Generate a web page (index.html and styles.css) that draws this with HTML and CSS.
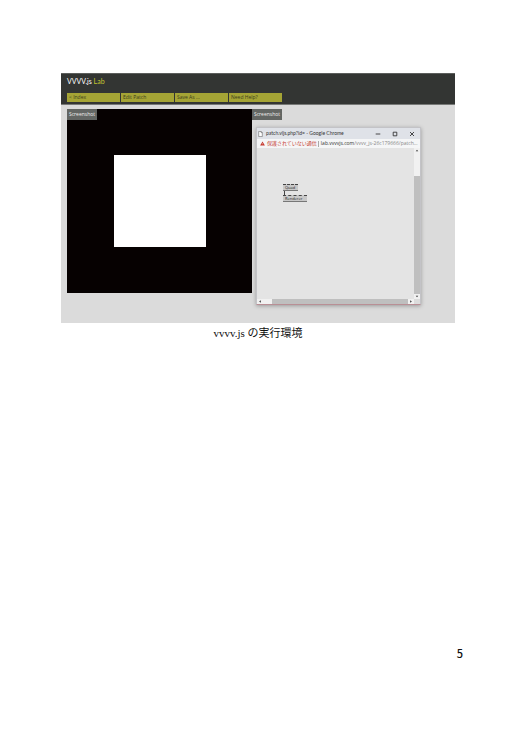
FILE: index.html
```
<!DOCTYPE html>
<html lang="ja">
<head>
    <meta charset="UTF-8">
    <meta name="viewport" content="width=device-width, initial-scale=1.0">
    <title>vvvv.js の実行環境</title>
    <link rel="stylesheet" href="styles.css">
</head>
<body>
    <figure class="figure">
        <div class="lab">
            <!-- Header -->
            <header class="lab-header">
                <div class="lab-brand">VVVV.js <span class="lab-name">Lab</span></div>
                <nav class="lab-nav">
                    <a href="#" class="lab-link">&lt; Index</a>
                    <a href="#" class="lab-link">Edit Patch</a>
                    <a href="#" class="lab-link">Save As ...</a>
                    <a href="#" class="lab-link">Need Help?</a>
                </nav>
            </header>

            <div class="stage">
                <!-- Renderer output -->
                <div class="renderer">
                    <button type="button" class="shot-btn">Screenshot</button>
                    <div class="quad"></div>
                </div>

                <!-- Patch window -->
                <div class="side">
                    <button type="button" class="shot-btn">Screenshot</button>
                    <div class="window">
                        <div class="titlebar">
                            <svg class="doc-icon" viewBox="0 0 8 10"><path d="M1 .7h4l2 2v6.6H1zM5 .7v2h2" fill="#fff" stroke="#555" stroke-width=".9"/></svg>
                            <span class="title">patch.vljs.php?id= - Google Chrome</span>
                            <button type="button" class="win-btn" aria-label="Minimize"><svg viewBox="0 0 6 6"><path d="M.7 3h4.6"/></svg></button>
                            <button type="button" class="win-btn" aria-label="Maximize"><svg viewBox="0 0 6 6"><path d="M1.2 1.2h3.6v3.6H1.2z"/></svg></button>
                            <button type="button" class="win-btn" aria-label="Close"><svg viewBox="0 0 6 6"><path d="M1 1l4 4M5 1L1 5"/></svg></button>
                        </div>
                        <div class="address">
                            <svg class="warn-icon" viewBox="0 0 10 10"><path d="M5 .8L9.8 9.2H.2z" fill="#c5392f"/><path d="M5 4v2M5 7.2v1" stroke="#fff" stroke-width=".7"/></svg>
                            <span class="warn">保護されていない通信</span>
                            <span class="divider"></span>
                            <span class="url"><span class="host">lab.vvvvjs.com</span>/vvvv_js-26c179666/patch...</span>
                        </div>
                        <div class="view">
                            <div class="patch">
                                <div class="node node-quad">Quad</div>
                                <div class="wire"></div>
                                <div class="node node-renderer">Renderer</div>
                            </div>
                            <div class="scroll-y">
                                <svg class="arrow" viewBox="0 0 6 6"><path d="M1.5 4L3 2l1.5 2z"/></svg>
                                <div class="thumb-y"></div>
                                <svg class="arrow" viewBox="0 0 6 6"><path d="M1.5 2L3 4l1.5-2z"/></svg>
                            </div>
                            <div class="scroll-x">
                                <svg class="arrow" viewBox="0 0 6 6"><path d="M4 1.5L2 3l2 1.5z"/></svg>
                                <div class="thumb-x"></div>
                                <svg class="arrow" viewBox="0 0 6 6"><path d="M2 1.5L4 3 2 4.5z"/></svg>
                            </div>
                            <div class="corner"></div>
                        </div>
                    </div>
                </div>
            </div>
        </div>
        <figcaption class="caption">vvvv.js の実行環境</figcaption>
    </figure>

    <footer class="page-number">5</footer>
</body>
</html>
```

FILE: styles.css
```
* {
    margin: 0;
    padding: 0;
    box-sizing: border-box;
}

:root {
    --dark: #333533;
    --olive: #a5a435;
    --panel: #dbdbdb;
    --ui-font: "Open Sans", "Noto Sans CJK JP", sans-serif;
}

body {
    display: flex;
    flex-direction: column;
    min-height: 100vh;
    padding: 73px 53px 69px 61px;
    background-color: #fff;
    color: #111;
}

button {
    border: none;
    background: none;
    font: inherit;
    color: inherit;
}

.figure {
    margin-right: 8px;
}

.lab {
    background-color: var(--panel);
    font-family: var(--ui-font);
    font-size: 5px;
    line-height: 9px;
}

/* Header */
.lab-header {
    padding: 3px 6px 2px;
    background-color: var(--dark);
    border-top: 1px solid #5c5e5c;
    border-bottom: 1px solid #777977;
}

.lab-brand {
    margin-bottom: 7px;
    color: #fff;
    font-family: Lato, sans-serif;
    font-size: 7px;
}

.lab-name {
    color: #c4c42f;
}

.lab-nav {
    display: flex;
    gap: 1px;
}

.lab-link {
    width: 53px;
    padding-left: 2px;
    background-color: var(--olive);
    color: #3c3d1c;
    text-decoration: none;
}

/* Stage */
.stage {
    display: flex;
    padding: 4px 0 18px 6px;
}

.renderer {
    position: relative;
    display: flex;
    flex: none;
    align-items: center;
    justify-content: center;
    width: 185px;
    height: 184px;
    background-color: #060101;
}

.renderer .shot-btn {
    position: absolute;
    top: 0;
    left: 0;
}

.quad {
    width: 92px;
    height: 92px;
    background-color: #fff;
}

.shot-btn {
    display: block;
    width: 30px;
    height: 11px;
    background-color: #636663;
    color: #eee;
    line-height: 11px;
}

.side {
    flex: 1;
    min-width: 0;
}

/* Patch window */
.window {
    margin: 7px 34px 0 4px;
    border: 1px solid #c3c3c7;
    border-bottom-color: #b98f95;
    box-shadow: 0 1px 4px rgba(0, 0, 0, 0.3);
    background-color: #e4e4e4;
}

.titlebar {
    display: flex;
    align-items: center;
    height: 11px;
    padding: 0 5px 0 1px;
    background-color: #dfe2e8;
    color: #333;
}

.doc-icon {
    width: 5px;
    height: 6px;
    margin-right: 3px;
}

.title {
    flex: 1;
    min-width: 0;
    font-family: Lato, sans-serif;
    white-space: nowrap;
}

.win-btn {
    width: 6px;
    height: 6px;
    margin-left: 11px;
}

.win-btn svg {
    display: block;
    fill: none;
    stroke: #222;
    stroke-width: 0.8;
}

.address {
    display: flex;
    align-items: center;
    height: 9px;
    padding-left: 3px;
    background-color: #f5f6f7;
    white-space: nowrap;
    overflow: hidden;
}

.warn-icon {
    flex: none;
    width: 5px;
    height: 5px;
    margin-right: 2px;
}

.warn {
    color: #c5392f;
}

.divider {
    flex: none;
    width: 1px;
    height: 6px;
    margin: 0 2px 0 1px;
    background-color: #aaa;
}

.url {
    color: #888;
}

.host {
    color: #333;
}

/* Patch area with its scrollbars */
.view {
    display: grid;
    grid-template-columns: 1fr 6px;
    grid-template-rows: 151px 5px;
}

.patch {
    position: relative;
}

.node {
    position: absolute;
    left: 26px;
    height: 7px;
    padding-left: 2px;
    border-top: 1px dashed #444;
    border-bottom: 1px solid #777;
    background-color: #c8c8c8;
    color: #222;
    font-size: 4px;
    line-height: 5px;
}

.node-quad {
    top: 36px;
    width: 15px;
}

.node-renderer {
    top: 47px;
    width: 24px;
}

.wire {
    position: absolute;
    top: 43px;
    left: 27px;
    width: 1px;
    height: 4px;
    background-color: #444;
}

.scroll-y,
.scroll-x {
    display: flex;
    background-color: #f1f1f1;
}

.scroll-y {
    flex-direction: column;
}

.arrow {
    width: 6px;
    height: 5px;
    fill: #333;
}

.thumb-y {
    flex: 1;
    margin-top: 23px;
    background-color: #bfbfbf;
}

.thumb-x {
    flex: 1;
    margin-left: 9px;
    background-color: #bfbfbf;
}

.corner {
    background-color: #dcdcdc;
}

/* Caption and page number */
.caption {
    padding-top: 2px;
    font-family: "Liberation Serif", "Noto Sans CJK JP", serif;
    font-size: 11px;
    line-height: 16px;
    text-align: center;
}

.page-number {
    margin-top: auto;
    font-family: "Noto Sans CJK JP", sans-serif;
    font-size: 11px;
    font-weight: 500;
    line-height: 16px;
    text-align: right;
}
```
